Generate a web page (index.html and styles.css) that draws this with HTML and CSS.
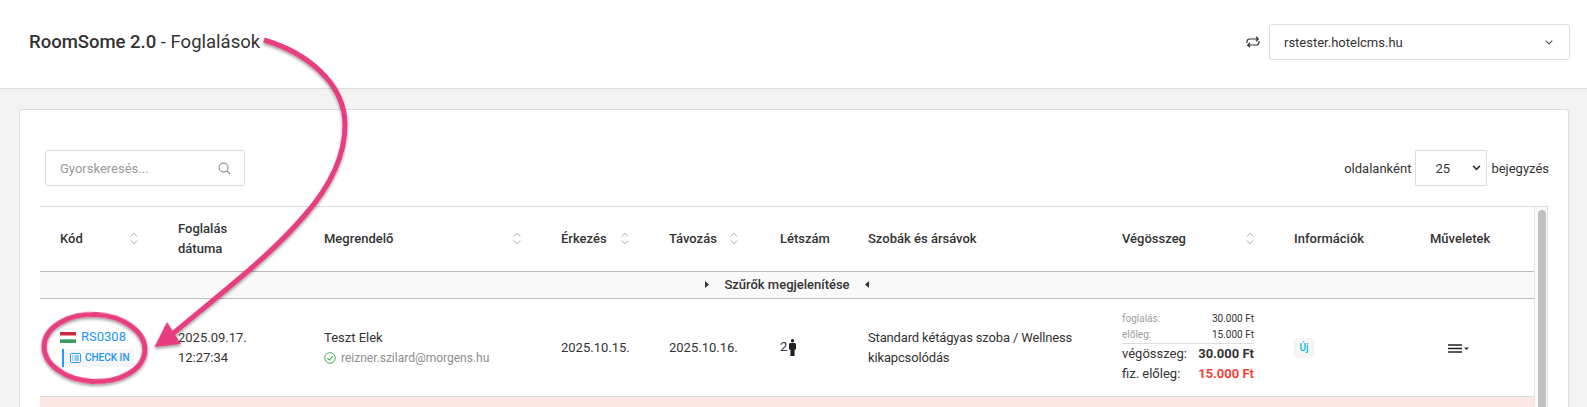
FILE: index.html
```html
<!DOCTYPE html>
<html lang="hu">
<head>
<meta charset="utf-8">
<title>RoomSome 2.0 - Foglalások</title>
<link rel="stylesheet" href="styles.css">
</head>
<body>
<header class="topbar">
  <h1 class="title"><b>RoomSome 2.0</b> - Foglalások</h1>
  <div class="site-switch">
    <svg class="swap" viewBox="0 0 14 12" width="14" height="12"><path d="M1 7V5.500A2.500 2.500 0 0 1 3.500 3H12M10 .8 12.300 3 10 5.200M13 5V6.500A2.500 2.500 0 0 1 10.500 9H2M4 6.800 1.700 9 4 11.200" fill="none" stroke="#333" stroke-width="1.200"/></svg>
    <div class="site-select">
      <span>rstester.hotelcms.hu</span>
      <svg viewBox="0 0 8 5" width="8" height="5"><path d="M.7.7 4 4 7.300.7" fill="none" stroke="#555" stroke-width="1.100"/></svg>
    </div>
  </div>
</header>
<main class="content">
  <section class="card">
    <div class="toolbar">
      <div class="search">
        <span>Gyorskeresés...</span>
        <svg viewBox="0 0 14 14" width="13" height="13"><circle cx="6" cy="6" r="4.800" fill="none" stroke="#999" stroke-width="1.300"/><path d="M9.500 9.500 13 13" stroke="#999" stroke-width="1.600"/></svg>
      </div>
      <div class="pager">
        <span>oldalanként</span>
        <div class="pager-select"><span>25</span><svg viewBox="0 0 10 7" width="9" height="6"><path d="M1 1 5 5 9 1" fill="none" stroke="#333" stroke-width="1.800"/></svg></div>
        <span>bejegyzés</span>
      </div>
    </div>
    <div class="table-wrap">
      <table class="bookings">
        <colgroup>
          <col class="c1"><col class="c2"><col class="c3"><col class="c4"><col class="c5"><col class="c6"><col class="c7"><col class="c8"><col class="c9"><col class="c10">
        </colgroup>
        <thead>
          <tr>
            <th><div class="th-sort">Kód<svg class="sort" viewBox="0 0 8 13" width="8" height="13"><path d="M.8 4.500 4 1.200 7.200 4.500M.8 8.500 4 11.800 7.200 8.500" fill="none" stroke="#aaa" stroke-width="1"/></svg></div></th>
            <th>Foglalás<br>dátuma</th>
            <th><div class="th-sort">Megrendelő<svg class="sort" viewBox="0 0 8 13" width="8" height="13"><path d="M.8 4.500 4 1.200 7.200 4.500M.8 8.500 4 11.800 7.200 8.500" fill="none" stroke="#aaa" stroke-width="1"/></svg></div></th>
            <th><div class="th-sort">Érkezés<svg class="sort" viewBox="0 0 8 13" width="8" height="13"><path d="M.8 4.500 4 1.200 7.200 4.500M.8 8.500 4 11.800 7.200 8.500" fill="none" stroke="#aaa" stroke-width="1"/></svg></div></th>
            <th><div class="th-sort th-tight">Távozás<svg class="sort" viewBox="0 0 8 13" width="8" height="13"><path d="M.8 4.500 4 1.200 7.200 4.500M.8 8.500 4 11.800 7.200 8.500" fill="none" stroke="#aaa" stroke-width="1"/></svg></div></th>
            <th>Létszám</th>
            <th>Szobák és ársávok</th>
            <th><div class="th-sort">Végösszeg<svg class="sort" viewBox="0 0 8 13" width="8" height="13"><path d="M.8 4.500 4 1.200 7.200 4.500M.8 8.500 4 11.800 7.200 8.500" fill="none" stroke="#aaa" stroke-width="1"/></svg></div></th>
            <th>Információk</th>
            <th>Műveletek</th>
          </tr>
          <tr class="filter-row">
            <td colspan="10">
              <div class="filter-toggle">
                <svg viewBox="0 0 4 7" width="4" height="7"><path d="M0 0 4 3.500 0 7Z" fill="#333"/></svg>
                <span>Szűrők megjelenítése</span>
                <svg viewBox="0 0 4 7" width="4" height="7"><path d="M4 0 0 3.500 4 7Z" fill="#333"/></svg>
              </div>
            </td>
          </tr>
        </thead>
        <tbody>
          <tr class="row">
            <td class="flat">
              <div class="code-line">
                <svg class="flag" viewBox="0 0 16 11" width="16" height="11"><rect width="16" height="3.700" fill="#cd2a3e"/><rect y="3.700" width="16" height="3.600" fill="#fff"/><rect y="7.300" width="16" height="3.700" fill="#3f9c5f"/></svg>
                <a class="code">RS0308</a>
              </div>
              <div class="checkin">
                <svg viewBox="0 0 11 10" width="11" height="10"><rect x=".5" y=".5" width="10" height="9" rx="1" fill="none" stroke="#2a9df4" stroke-width="1"/><path d="M2.200 3H3.200M4.500 3H9M2.200 5H3.200M4.500 5H9M2.200 7H3.200M4.500 7H9" stroke="#2a9df4" stroke-width="1"/></svg>
                <span>CHECK IN</span>
              </div>
            </td>
            <td>2025.09.17.<br>12:27:34</td>
            <td>
              <div>Teszt Elek</div>
              <div class="email">
                <svg viewBox="0 0 12 12" width="12" height="12"><circle cx="6" cy="6" r="5.300" fill="none" stroke="#4caf50" stroke-width="1"/><path d="M3.300 6.200 5.200 8 8.800 4.300" fill="none" stroke="#4caf50" stroke-width="1.100"/></svg>
                <span>reizner.szilard@morgens.hu</span>
              </div>
            </td>
            <td>2025.10.15.</td>
            <td>2025.10.16.</td>
            <td class="flat">
              <div class="guests">2<svg viewBox="0 0 7 17" width="7" height="17"><circle cx="3.500" cy="1.700" r="1.700" fill="#222"/><path d="M1 4H6L7 5V10.500H5.600V17H1.400V10.500H0V5Z" fill="#222"/></svg></div>
            </td>
            <td class="rooms">Standard kétágyas szoba / Wellness<br>kikapcsolódás</td>
            <td class="flat">
              <div class="sum-small"><span class="lbl">foglalás:</span><span>30.000 Ft</span></div>
              <div class="sum-small sum-last"><span class="lbl">előleg:</span><span>15.000 Ft</span></div>
              <div class="sum-big"><span>végösszeg:</span><b>30.000 Ft</b></div>
              <div class="sum-big"><span>fiz. előleg:</span><b class="due">15.000 Ft</b></div>
            </td>
            <td class="flat"><span class="badge">Új</span></td>
            <td>
              <div class="menu">
                <svg viewBox="0 0 22 9" width="22" height="9"><path d="M0 1H14M0 4.500H14M0 8H14" stroke="#222" stroke-width="1.600"/><path d="M16 3.500H21L18.500 6Z" fill="#333"/></svg>
              </div>
            </td>
          </tr>
          <tr class="row-alert"><td colspan="10"></td></tr>
        </tbody>
      </table>
      <div class="scroll-track"><div class="scroll-thumb"></div></div>
    </div>
  </section>
</main>
<svg class="annot" viewBox="0 0 1587 407" width="1587" height="407">
  <defs>
    <filter id="sh" x="-20%" y="-20%" width="140%" height="140%"><feDropShadow dx="0" dy="2" stdDeviation="1.800" flood-color="#000" flood-opacity=".38"/></filter>
  </defs>
  <g filter="url(#sh)">
    <path d="M264 40C305 52 345 82 345 125C345 160 325 192 305 215C270 256 225 290 170 336" fill="none" stroke="#e83e7e" stroke-width="5"/>
    <path d="M154.500 347 167 322 181 344Z" fill="#e83e7e"/>
    <ellipse cx="94.500" cy="348" rx="50.500" ry="33.500" transform="rotate(3 94.500 348)" fill="none" stroke="#e83e7e" stroke-width="5"/>
  </g>
</svg>
</body>
</html>
```
FILE: styles.css
```css
* { box-sizing: border-box; }
html, body { margin: 0; height: 407px; overflow: hidden; }
body {
  position: relative;
  background: #f3f3f3;
  font-family: Roboto, "Liberation Sans", sans-serif;
  font-size: 13px;
  color: #333;
}
.topbar {
  height: 89px;
  background: #fff;
  border-bottom: 1px solid #ddd;
  padding: 24px 17px 0 29px;
  display: flex;
  justify-content: space-between;
  align-items: flex-start;
}
.title {
  margin: 0;
  font-size: 18.500px;
  line-height: 36px;
  font-weight: 400;
  color: #333;
}
.title b { font-weight: 500; }
.site-switch { display: flex; align-items: center; gap: 9px; }
.swap { display: block; }
.site-select {
  width: 301px;
  height: 36px;
  border: 1px solid #ddd;
  border-radius: 3px;
  padding: 0 16px 0 14px;
  display: flex;
  align-items: center;
  justify-content: space-between;
  color: #333;
}
.content { padding: 20px 18px 0 19px; }
.card {
  height: 298px;
  background: #fff;
  border: 1px solid #ddd;
  border-bottom: 0;
  border-radius: 3px 3px 0 0;
  padding: 40px 0 0 20px;
}
.toolbar {
  display: flex;
  justify-content: space-between;
  padding: 0 19px 0 5px;
  height: 56px;
}
.search {
  width: 200px;
  height: 36px;
  border: 1px solid #ddd;
  border-radius: 3px;
  padding: 0 13px 0 14px;
  display: flex;
  align-items: center;
  justify-content: space-between;
  color: #999;
}
.pager { display: flex; align-items: center; height: 36px; gap: 4px; }
.pager-select {
  width: 72px;
  height: 36px;
  border: 1px solid #ddd;
  padding: 0 5px 0 19px;
  display: flex;
  align-items: center;
  justify-content: space-between;
}
.table-wrap {
  width: 1508px;
  height: 201px;
  border-top: 1px solid #ddd;
  border-right: 1px solid #ddd;
  display: flex;
  align-items: flex-start;
  overflow: hidden;
}
.bookings {
  width: 1494px;
  flex: none;
  table-layout: fixed;
  border-collapse: collapse;
}
.c1 { width: 118px; }
.c2 { width: 146px; }
.c3 { width: 237px; }
.c4 { width: 108px; }
.c5 { width: 111px; }
.c6 { width: 88px; }
.c7 { width: 254px; }
.c8 { width: 172px; }
.c9 { width: 136px; }
.c10 { width: 124px; }
.bookings th {
  height: 64px;
  padding: 0 20px;
  text-align: left;
  font-weight: 500;
  line-height: 20px;
  border-bottom: 1px solid #bbb;
  color: #333;
}
.th-sort { display: flex; justify-content: space-between; align-items: center; }
.th-tight { padding-right: 2px; }
.sort { display: block; }
.filter-row td {
  height: 27px;
  background: #f9f9f9;
  border-bottom: 1px solid #bbb;
  padding: 0;
}
.filter-toggle {
  display: flex;
  justify-content: center;
  align-items: center;
  gap: 15px;
  font-weight: 500;
}
.row td {
  height: 98px;
  padding: 2px 20px 0;
  line-height: 20px;
  color: #333;
  border-bottom: 1px solid #ddd;
}
.row td.flat { padding-top: 0; }
.row td.rooms { letter-spacing: -0.15px; }
.code-line { display: flex; align-items: center; gap: 5px; }
.flag { display: block; }
.code { color: #2196f3; font-size: 13px; }
.checkin {
  margin: 2px 0 0 2px;
  width: 72px;
  height: 18px;
  background: #f5f5f5;
  border-left: 2px solid #1e9bff;
  display: flex;
  align-items: center;
  gap: 4px;
  padding-left: 6px;
  color: #2196f3;
  font-size: 10px;
  font-weight: 500;
}
.email {
  display: flex;
  align-items: center;
  gap: 5px;
  color: #8e8e8e;
  font-size: 12px;
}
.guests { display: flex; align-items: center; gap: 2px; }
.sum-small {
  display: flex;
  justify-content: space-between;
  font-size: 10px;
  line-height: 16px;
}
.sum-last { border-bottom: 1px solid #ddd; }
.lbl { color: #a0a0a0; }
.sum-big {
  display: flex;
  justify-content: space-between;
  line-height: 20px;
}
.sum-big b { font-weight: 700; }
.sum-big .due { color: #f44336; }
.badge {
  display: inline-block;
  width: 20px;
  height: 20px;
  background: #f5f5f5;
  border-radius: 2px;
  color: #00bcd4;
  font-size: 10px;
  font-weight: 500;
  text-align: center;
}
.menu { display: flex; margin-left: 18px; }
.row-alert td { height: 11px; background: #fde7e5; }
.scroll-track {
  flex: none;
  width: 13px;
  height: 200px;
  padding: 3px 3px 0;
  background: #fafafa;
  border-left: 1px solid #e8e8e8;
}
.scroll-thumb { height: 197px; width: 8px; background: #c1c1c1; border-radius: 4px 4px 0 0; }
.annot { position: absolute; left: 0; top: 0; pointer-events: none; }
```
